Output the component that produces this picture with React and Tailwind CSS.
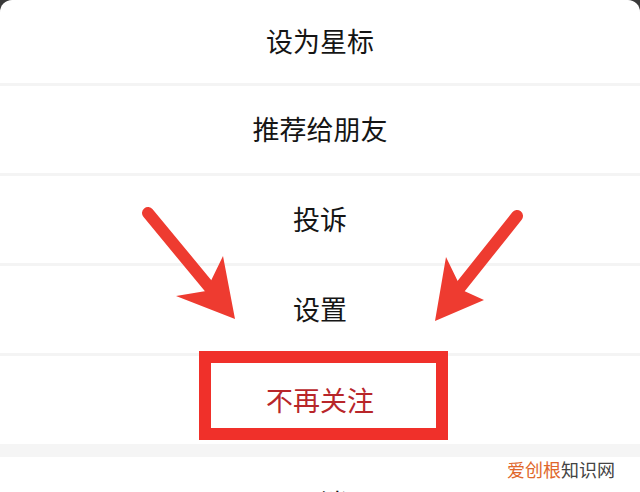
import React from "react";

const items = ["设为星标", "推荐给朋友", "投诉", "设置"];

function Arrows() {
  return (
    <svg
      className="absolute inset-0 pointer-events-none"
      width="640"
      height="492"
      viewBox="0 0 640 492"
    >
      {/* left arrow */}
      <line x1="148" y1="213" x2="210" y2="288" stroke="#ee3b30" strokeWidth="12" strokeLinecap="round" />
      <polygon points="235,319 223,256 206,291 176,296" fill="#ee3b30" />
      {/* right arrow */}
      <line x1="517" y1="216" x2="458" y2="290" stroke="#ee3b30" strokeWidth="12" strokeLinecap="round" />
      <polygon points="435,321 446,257 462,290 484,300" fill="#ee3b30" />
    </svg>
  );
}

export default function App() {
  return (
    <div
      className="relative w-[640px] h-[492px] overflow-hidden bg-[#3a3a3a]"
      style={{ fontFamily: '"Noto Sans CJK SC", "Noto Sans", sans-serif' }}
    >
      <div className="bg-white rounded-t-[12px] flex flex-col">
        {items.map((label) => (
          <React.Fragment key={label}>
            <div className="h-[87px] first:h-[83px] flex items-center justify-center text-[27px] text-[#151515]">
              {label}
            </div>
            <div className="h-[3px] bg-[#f4f4f4]" />
          </React.Fragment>
        ))}
        <div className="h-[88px] flex items-center justify-center text-[27px] text-[#b8262a]">
          不再关注
        </div>
        <div className="h-[13px] bg-[#f5f5f5]" />
        <div className="h-[92px] flex items-center justify-center text-[27px] text-[#151515]">
          取消
        </div>
      </div>

      {/* highlight box */}
      <div className="absolute left-[199px] top-[351px] w-[249px] h-[89px] border-[12px] border-[#f0302a]" />

      <Arrows />

      {/* watermark */}
      <div className="absolute left-[507px] top-[460px] text-[18px] leading-none">
        <span className="text-[#e0672b]">爱创根</span>
        <span className="text-[#444444]">知识网</span>
      </div>
    </div>
  );
}
